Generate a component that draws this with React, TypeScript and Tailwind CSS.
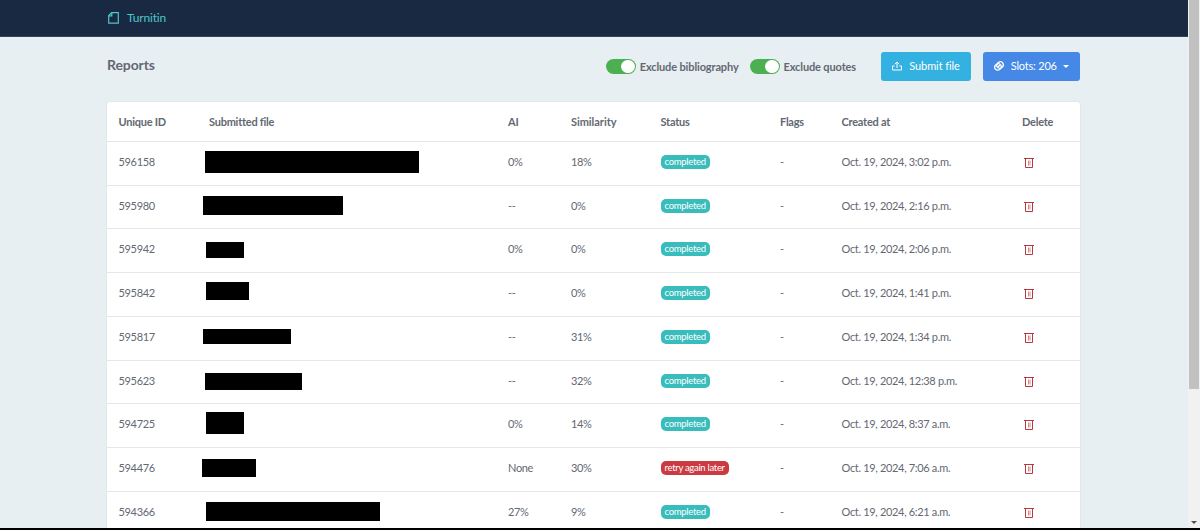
import { useState } from "react";

// bar: the hidden file name [left, top, width, height] inside its cell
const reports = [
  { id: "596158", bar: [-4, 9, 214, 22], ai: "0%", similarity: "18%", status: "completed", created: "Oct. 19, 2024, 3:02 p.m." },
  { id: "595980", bar: [-6, 10.25, 140, 19], ai: "--", similarity: "0%", status: "completed", created: "Oct. 19, 2024, 2:16 p.m." },
  { id: "595942", bar: [-3.5, 12.25, 38, 16], ai: "0%", similarity: "0%", status: "completed", created: "Oct. 19, 2024, 2:06 p.m." },
  { id: "595842", bar: [-3, 8.75, 43, 18], ai: "--", similarity: "0%", status: "completed", created: "Oct. 19, 2024, 1:41 p.m." },
  { id: "595817", bar: [-6, 12.25, 88, 15], ai: "--", similarity: "31%", status: "completed", created: "Oct. 19, 2024, 1:34 p.m." },
  { id: "595623", bar: [-4, 12.5, 97, 17], ai: "--", similarity: "32%", status: "completed", created: "Oct. 19, 2024, 12:38 p.m." },
  { id: "594725", bar: [-3.5, 7.75, 38, 22], ai: "0%", similarity: "14%", status: "completed", created: "Oct. 19, 2024, 8:37 a.m." },
  { id: "594476", bar: [-7, 11.25, 54, 18], ai: "None", similarity: "30%", status: "retry again later", created: "Oct. 19, 2024, 7:06 a.m." },
  { id: "594366", bar: [-3.5, 10.25, 174.5, 19], ai: "27%", similarity: "9%", status: "completed", created: "Oct. 19, 2024, 6:21 a.m." },
];

const columns = "grid grid-cols-[90.5px_299px_63px_89.5px_119.5px_61.5px_180.5px_1fr] pl-[11.5px]";

const Toggle = ({ label }: any) => {
  const [on, setOn] = useState(true);

  return (
    <div className="flex items-center cursor-pointer" onClick={() => setOn(!on)}>
      <div
        className={`flex w-[30px] h-[15px] rounded-full p-px ${
          on ? "bg-[#4caf50] justify-end" : "bg-gray-400 justify-start"
        }`}
      >
        <div className="w-[14px] h-[13px] rounded-full bg-white" />
      </div>
      <div className="ml-1 pt-px font-bold text-[11px] leading-4 tracking-[-0.13px] whitespace-nowrap">{label}</div>
    </div>
  );
};

const TrashIcon = () => (
  <svg width="10" height="10" viewBox="0 0 10 10" fill="none" stroke="#b8383d">
    <path d="M0 .5h10" />
    <path d="M1.5 1v8.5h7V1" />
    <path d="M4.5 2.5v5M6 2.5v5" strokeOpacity=".6" />
  </svg>
);

export default function App() {
  return (
    <div className="flex flex-col h-[530px] overflow-hidden font-['Lato','Liberation_Sans',sans-serif] text-[#636872]">
      <div className="flex flex-1 min-h-0">
        <div className="flex-1 min-w-0 overflow-hidden bg-[#e8eff2]">
          <div className="flex items-center h-[37px] pl-[108px] bg-[#1a2942] border-b border-[#32435c] text-[#4cc6cb]">
            <svg width="11" height="12" viewBox="0 0 11 12" fill="none" stroke="currentColor" strokeWidth="1.2">
              <path d="M3.6.7h6.7v10.5H.7V3.6z" />
              <path d="M3.8.8v3H.8" />
            </svg>
            <div className="ml-[8px] text-[12px] tracking-[-0.15px]">Turnitin</div>
          </div>

          <div className="ml-[107px] w-[973px]">
            <div className="flex items-center h-[58px] mb-[6.5px]">
              <div className="mr-auto text-[14px] font-bold pb-[3px] tracking-[-0.1px]">Reports</div>
              <Toggle label="Exclude bibliography" />
              <div className="w-[11px]" />
              <Toggle label="Exclude quotes" />
              <div className="flex items-center justify-center w-[90px] h-[29px] ml-[25px] rounded-[3px] bg-[#33b1e1] text-white text-[11px] cursor-pointer">
                <svg width="10" height="10" viewBox="0 0 10 10" fill="none" stroke="currentColor">
                  <path d="M5 7V1M2.8 3.2 5 1l2.2 2.2M2.5 5H.5v4h9V5h-2" />
                </svg>
                <div className="ml-[7px] pt-px tracking-[-0.1px]">Submit file</div>
              </div>
              <div className="flex items-center justify-center w-[97.5px] h-[29px] ml-[11.5px] rounded-[3px] bg-[#4588e6] text-white text-[11px] cursor-pointer">
                <svg width="10" height="10" viewBox="0 0 10 10" fill="none" stroke="currentColor" strokeWidth="1.3">
                  <ellipse cx="6" cy="4" rx="3.4" ry="3" transform="rotate(-35 6 4)" />
                  <ellipse cx="4" cy="6" rx="3.4" ry="3" transform="rotate(-35 4 6)" />
                  <path d="m4 6 2-2" />
                </svg>
                <div className="ml-[7px] pt-px tracking-[-0.2px]">Slots: 206</div>
                <div className="ml-[6px] border-x-[3px] border-t-[3px] border-x-transparent border-t-white" />
              </div>
            </div>

            <div className="rounded-t-[3px] bg-white shadow-[0_0_2px_rgba(40,60,80,0.12)]">
              <div className={`${columns} h-[39.25px] pt-[12.5px] text-[11px] leading-4 font-bold tracking-[-0.25px]`}>
                <div>Unique ID</div>
                <div>Submitted file</div>
                <div>AI</div>
                <div className="tracking-[-0.05px]">Similarity</div>
                <div>Status</div>
                <div>Flags</div>
                <div>Created at</div>
                <div>Delete</div>
              </div>
              {reports.map(({ id, bar, ai, similarity, status, created }) => (
                <div
                  key={id}
                  className={`${columns} h-[43.75px] border-t border-[#e4e7ea] text-[11px] leading-[39px] tracking-[-0.33px]`}
                >
                  <div>{id}</div>
                  <div>
                    <div
                      className="bg-black"
                      style={{ marginLeft: bar[0], marginTop: bar[1], width: bar[2], height: bar[3] }}
                    />
                  </div>
                  <div>{ai}</div>
                  <div>{similarity}</div>
                  <div className="pt-[13px]">
                    <div
                      className={`w-fit h-[14px] px-1 rounded-[5px] text-white text-[9.5px] leading-[13px] tracking-[-0.3px] ${
                        status === "completed" ? "bg-[#39bcbc]" : "bg-[#cb3a40]"
                      }`}
                    >
                      {status}
                    </div>
                  </div>
                  <div>-</div>
                  <div>{created}</div>
                  <div className="pt-[16px] pl-[2px]">
                    <TrashIcon />
                  </div>
                </div>
              ))}
            </div>
          </div>
        </div>

        {/* scrollbar */}
        <div className="flex flex-col items-center w-[12px] bg-[#f1f1f1]">
          <div className="w-[10px] h-[389px] bg-[#c1c1c1]" />
          <div className="mt-auto mb-[4px] border-x-[3px] border-t-[3px] border-x-transparent border-t-[#505050]" />
        </div>
      </div>
      <div className="h-[2px] shrink-0 bg-black" />
    </div>
  );
}
